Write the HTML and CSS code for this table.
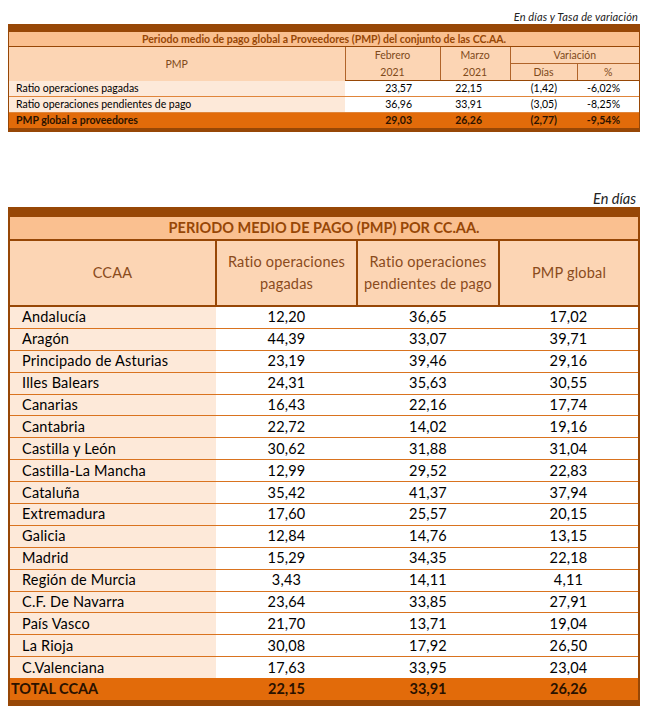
FILE: index.html
```html
<!DOCTYPE html>
<html lang="es">
<head>
<meta charset="utf-8">
<title>PMP CC.AA.</title>
<link rel="stylesheet" href="styles.css">
</head>
<body>
<div class="page">
  <section class="block block-top">
    <p class="unit unit-small">En días y Tasa de variación</p>
    <div class="frame frame-top">
      <div class="band band-top"></div>
      <table class="t1">
        <colgroup>
          <col class="c1a"><col class="c1b"><col class="c1c"><col class="c1d"><col class="c1e">
        </colgroup>
        <thead>
          <tr class="t1-title"><th colspan="5">Periodo medio de pago global a Proveedores (PMP) del conjunto de las CC.AA.</th></tr>
          <tr class="t1-head">
            <th rowspan="2" class="t1-pmp">PMP</th>
            <th class="vl">Febrero</th>
            <th class="vl">Marzo</th>
            <th colspan="2" class="vl var">Variación</th>
          </tr>
          <tr class="t1-head t1-head2">
            <th class="vl">2021</th>
            <th class="vl">2021</th>
            <th class="vl">Días</th>
            <th class="vl">%</th>
          </tr>
        </thead>
        <tbody>
          <tr class="t1-row">
            <td class="name">Ratio operaciones pagadas</td>
            <td class="n n-feb">23,57</td><td class="n n-mar">22,15</td><td class="n n-d">(1,42)</td><td class="n n-p">-6,02%</td>
          </tr>
          <tr class="t1-row">
            <td class="name">Ratio operaciones pendientes de pago</td>
            <td class="n n-feb">36,96</td><td class="n n-mar">33,91</td><td class="n n-d">(3,05)</td><td class="n n-p">-8,25%</td>
          </tr>
          <tr class="t1-total">
            <td class="name">PMP global a proveedores</td>
            <td class="n n-feb">29,03</td><td class="n n-mar">26,26</td><td class="n n-d">(2,77)</td><td class="n n-p">-9,54%</td>
          </tr>
        </tbody>
      </table>
      <div class="band band-top-bottom"></div>
    </div>
  </section>

  <section class="block block-bottom">
    <p class="unit unit-big">En días</p>
    <div class="frame frame-bottom">
      <div class="band band-b"></div>
      <table class="t2">
        <colgroup>
          <col class="c2a"><col class="c2b"><col class="c2c"><col class="c2d">
        </colgroup>
        <thead>
          <tr class="t2-title"><th colspan="4">PERIODO MEDIO DE PAGO (PMP) POR CC.AA.</th></tr>
          <tr class="t2-head">
            <th>CCAA</th>
            <th class="vl2">Ratio operaciones<br>pagadas</th>
            <th class="vl2">Ratio operaciones<br>pendientes de pago</th>
            <th class="vl2">PMP global</th>
          </tr>
        </thead>
        <tbody>
          <tr><td class="name">Andalucía</td><td>12,20</td><td>36,65</td><td>17,02</td></tr>
          <tr><td class="name">Aragón</td><td>44,39</td><td>33,07</td><td>39,71</td></tr>
          <tr><td class="name">Principado de Asturias</td><td>23,19</td><td>39,46</td><td>29,16</td></tr>
          <tr><td class="name">Illes Balears</td><td>24,31</td><td>35,63</td><td>30,55</td></tr>
          <tr><td class="name">Canarias</td><td>16,43</td><td>22,16</td><td>17,74</td></tr>
          <tr><td class="name">Cantabria</td><td>22,72</td><td>14,02</td><td>19,16</td></tr>
          <tr><td class="name">Castilla y León</td><td>30,62</td><td>31,88</td><td>31,04</td></tr>
          <tr><td class="name">Castilla-La Mancha</td><td>12,99</td><td>29,52</td><td>22,83</td></tr>
          <tr><td class="name">Cataluña</td><td>35,42</td><td>41,37</td><td>37,94</td></tr>
          <tr><td class="name">Extremadura</td><td>17,60</td><td>25,57</td><td>20,15</td></tr>
          <tr><td class="name">Galicia</td><td>12,84</td><td>14,76</td><td>13,15</td></tr>
          <tr><td class="name">Madrid</td><td>15,29</td><td>34,35</td><td>22,18</td></tr>
          <tr><td class="name">Región de Murcia</td><td>3,43</td><td>14,11</td><td>4,11</td></tr>
          <tr><td class="name">C.F. De Navarra</td><td>23,64</td><td>33,85</td><td>27,91</td></tr>
          <tr><td class="name">País Vasco</td><td>21,70</td><td>13,71</td><td>19,04</td></tr>
          <tr><td class="name">La Rioja</td><td>30,08</td><td>17,92</td><td>26,50</td></tr>
          <tr class="last"><td class="name">C.Valenciana</td><td>17,63</td><td>33,95</td><td>23,04</td></tr>
          <tr class="t2-total"><td class="name">TOTAL CCAA</td><td>22,15</td><td>33,91</td><td>26,26</td></tr>
        </tbody>
      </table>
      <div class="band band-b-bottom"></div>
    </div>
  </section>
</div>
</body>
</html>
```
FILE: styles.css
```css
html, body {
  margin: 0;
  padding: 0;
  background: #ffffff;
}

body {
  font-family: Lato, "Liberation Sans", sans-serif;
  color: #000000;
}

.page {
  width: 648px;
  padding: 9px 0 0 8px;
  box-sizing: border-box;
}

.unit {
  margin: 0;
  text-align: right;
  font-style: italic;
  color: #222222;
}

.unit-small {
  width: 630px;
  font-size: 11px;
  letter-spacing: 0.15px;
  line-height: 15px;
}

.unit-big {
  width: 628px;
  font-size: 14.5px;
  line-height: 17px;
}

.frame {
  width: 632px;
  box-sizing: border-box;
}

.frame-top {
  border-left: 1px solid #974706;
  border-right: 1px solid #974706;
}

.frame-bottom {
  border-left: 2px solid #974706;
  border-right: 2px solid #974706;
}

.band {
  background: #974706;
}

.band-top { height: 8px; }
.band-top-bottom { height: 4px; }
.band-b { height: 10px; }
.band-b-bottom { height: 6px; }

table {
  border-collapse: collapse;
  table-layout: fixed;
  width: 100%;
}

th, td {
  padding: 0;
}

/* ---------- top table ---------- */
.t1 {
  font-size: 10.5px;
}

.c1a { width: 336px; }
.c1b { width: 95px; }
.c1c { width: 70px; }
.c1d { width: 67px; }
.c1e { width: 62px; }

.t1-title th {
  background: #fac090;
  color: #974706;
  font-weight: 700;
  height: 14px;
  line-height: 14px;
  border-bottom: 1px solid #974706;
}

.t1-head th {
  background: #fcd5b4;
  color: #7f4a1a;
  font-weight: 400;
  height: 16px;
  line-height: 16px;
}

.t1-pmp {
  vertical-align: middle;
}

.t1-head2 th {
  border-bottom: 1px solid #974706;
}

.t1 .vl {
  border-left: 1px solid #b0642a;
}

.t1 .var {
  border-bottom: 1px solid #b0642a;
}

.t1-row td {
  height: 15px;
  line-height: 15px;
  border-bottom: 1px solid #e0853a;
  background: #ffffff;
}

.t1-row .name {
  background: #fde9d9;
}

.t1 .name {
  padding-left: 7px;
  white-space: nowrap;
}

.t1 .n {
  text-align: right;
}

.t1 .n-feb { padding-right: 28px; }
.t1 .n-mar { padding-right: 28px; }
.t1 .n-d { padding-right: 20px; }
.t1 .n-p { padding-right: 19px; }

.t1-total td {
  background: #e26b0a;
  font-weight: 700;
  color: #2a1200;
  height: 15px;
  line-height: 15px;
}

/* ---------- bottom section ---------- */
.block-bottom {
  margin-top: 58px;
}

.t2 {
  font-size: 14.5px;
  letter-spacing: 0.2px;
}

.c2a { width: 206px; }
.c2b { width: 141px; }
.c2c { width: 142px; }
.c2d { width: 139px; }

.t2-title th {
  background: #fac090;
  color: #974706;
  font-weight: 700;
  height: 22px;
  line-height: 22px;
  border-bottom: 2px solid #974706;
  letter-spacing: 0;
}

.t2-head th {
  background: #fcd5b4;
  color: #8a4b1c;
  font-weight: 400;
  height: 64px;
  line-height: 22px;
  border-bottom: 2px solid #974706;
}

.t2 .vl2 {
  border-left: 2px solid #974706;
}

.t2 tbody td {
  height: 20.9px;
  line-height: 20px;
  text-align: center;
  background: #ffffff;
  border-bottom: 1px solid #d9731f;
}

.t2 tbody .name {
  text-align: left;
  padding-left: 12px;
  background: #fde9d9;
}

.t2 tbody tr.last td {
  border-bottom: none;
}

.t2 .t2-total td {
  background: #e26b0a;
  font-weight: 700;
  color: #2a1200;
  height: 22px;
  line-height: 22px;
  border-bottom: none;
  letter-spacing: 0;
}

.t2 .t2-total .name {
  padding-left: 1px;
  background: #e26b0a;
}
```
